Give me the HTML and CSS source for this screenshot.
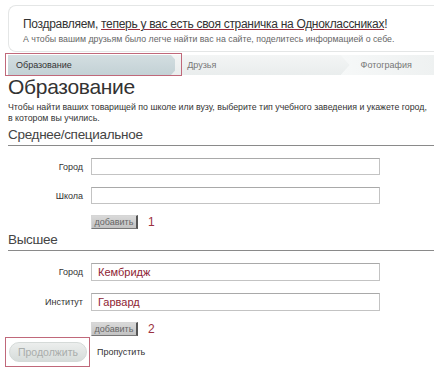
FILE: index.html
```html
<!DOCTYPE html>
<html lang="ru">
<head>
    <meta charset="UTF-8">
    <title>Образование</title>
    <link rel="stylesheet" href="styles.css">
</head>
<body>
    <div class="page">
        <div class="notice">
            <p class="notice-title">Поздравляем, <u>теперь у вас есть своя страничка на Одноклассниках</u>!</p>
            <p class="notice-text">А чтобы вашим друзьям было легче найти вас на сайте, поделитесь информацией о себе.</p>
        </div>

        <div class="steps">
            <div class="step step-active">Образование</div>
            <div class="step step-friends">Друзья</div>
            <div class="step step-photo">Фотография</div>
        </div>

        <h1>Образование</h1>
        <p class="intro">Чтобы найти ваших товарищей по школе или вузу, выберите тип учебного заведения и укажете город,<br>в котором вы учились.</p>

        <!-- Среднее -->
        <h2>Среднее/специальное</h2>
        <div class="row">
            <label for="school-city">Город</label>
            <input type="text" id="school-city">
        </div>
        <div class="row">
            <label for="school">Школа</label>
            <input type="text" id="school">
        </div>
        <div class="add-row">
            <button type="button" class="add">добавить</button>
            <span class="num">1</span>
        </div>

        <!-- Высшее -->
        <h2>Высшее</h2>
        <div class="row row-filled">
            <label for="uni-city">Город</label>
            <input type="text" id="uni-city" value="Кембридж">
        </div>
        <div class="row row-filled">
            <label for="uni">Институт</label>
            <input type="text" id="uni" value="Гарвард">
        </div>
        <div class="add-row">
            <button type="button" class="add">добавить</button>
            <span class="num">2</span>
        </div>

        <div class="actions">
            <span class="continue-mark">
                <button type="button" class="continue">Продолжить</button>
            </span>
            <a href="#" class="skip">Пропустить</a>
        </div>
    </div>
</body>
</html>
```

FILE: styles.css
```css
body {
    margin: 0;
    overflow: hidden;
    background: #fff;
    font-family: "Liberation Sans", Arial, sans-serif;
    color: #333;
}
.page {
    width: 440px;
    padding: 5px 0 0 8px;
}
p {
    margin: 0;
}
.notice {
    height: 47px;
    border: 1px solid #e4e6e6;
    border-right: none;
    border-radius: 8px 0 0 8px;
    padding: 11px 0 0 14px;
    box-sizing: border-box;
}
.notice-title {
    font-size: 12px;
    letter-spacing: -0.3px;
    color: #333;
    line-height: 15px;
    white-space: nowrap;
}
.notice-title u {
    text-decoration-color: #9b2c3c;
}
.notice-text {
    font-size: 8.8px;
    color: #666;
    line-height: 12px;
    margin-top: 1px;
    white-space: nowrap;
}
.steps {
    position: relative;
    display: flex;
    height: 20px;
    margin-top: 3px;
    background: linear-gradient(to bottom, #f3f5f5, #e9eded);
    font-size: 9px;
    line-height: 20px;
    color: #777;
}
/* red marker around the current step */
.steps::before {
    content: "";
    position: absolute;
    left: -3px;
    top: -2px;
    width: 177px;
    height: 23px;
    box-sizing: border-box;
    border: 1px solid #c0687a;
    pointer-events: none;
}
.step-active {
    width: 172px;
    padding-left: 8px;
    box-sizing: border-box;
    color: #333;
    background: linear-gradient(to bottom, #d3dee1, #c3d1d5);
    clip-path: polygon(0 0, 163px 0, 172px 50%, 163px 100%, 0 100%);
}
.step-friends {
    margin-left: 12px;
    width: 158px;
}
.step-photo {
    padding-left: 20px;
    width: 90px;
    background: linear-gradient(to right, #f6f8f8, #edf0f0);
    clip-path: polygon(0 0, 100% 0, 100% 100%, 0 100%, 9px 50%);
}
h1 {
    font-size: 21px;
    letter-spacing: -0.3px;
    font-weight: normal;
    color: #333;
    margin: 0;
    line-height: 24px;
}
.intro {
    font-size: 8.8px;
    line-height: 11px;
    color: #333;
    margin-top: 3px;
}
h2 {
    font-size: 13.5px;
    letter-spacing: -0.3px;
    font-weight: normal;
    color: #444;
    margin: 2px 0 0;
    line-height: 17px;
    padding-bottom: 2px;
    border-bottom: 1px solid #8a8a8a;
}
.row {
    display: flex;
    align-items: center;
    margin-top: 12px;
    height: 17px;
}
label {
    width: 75px;
    text-align: right;
    font-size: 9px;
    color: #333;
}
input[type="text"] {
    margin-left: 8px;
    width: 289px;
    height: 17px;
    box-sizing: border-box;
    border: 1px solid #c3c3c3;
    border-top-color: #a9a9a9;
    padding: 0 6px;
    font-family: inherit;
    font-size: 11px;
    color: #8e2433;
}
.row-filled {
    height: 18px;
}
.row-filled input[type="text"] {
    height: 18px;
}
.add-row {
    display: flex;
    align-items: center;
    margin: 11px 0 0 83px;
    height: 14px;
}
.add {
    height: 14px;
    width: 47px;
    padding: 0;
    border: 1px solid #d6d6d6;
    border-right: 2px solid #555;
    border-bottom: 1px solid #777;
    background: linear-gradient(to bottom, #d9d9d9, #c2c2c2);
    font-family: inherit;
    font-size: 9px;
    color: #666;
    line-height: 12px;
}
.num {
    margin-left: 10px;
    font-size: 12px;
    color: #9b3040;
}
.actions {
    display: flex;
    align-items: center;
    margin: 1px 0 0 -3px;
}
.continue-mark {
    display: block;
    padding: 4px 2px 4px 3px;
    border: 1px solid #c0687a;
}
.continue {
    display: block;
    width: 78px;
    height: 20px;
    border: 1px solid #d5dad8;
    border-radius: 10px;
    background: linear-gradient(to bottom, #eceeed, #d6dcda);
    font-family: inherit;
    font-size: 10.5px;
    color: #a9adab;
    padding: 0;
}
.skip {
    margin-left: 7px;
    font-size: 9px;
    color: #333;
    text-decoration: none;
}
```
